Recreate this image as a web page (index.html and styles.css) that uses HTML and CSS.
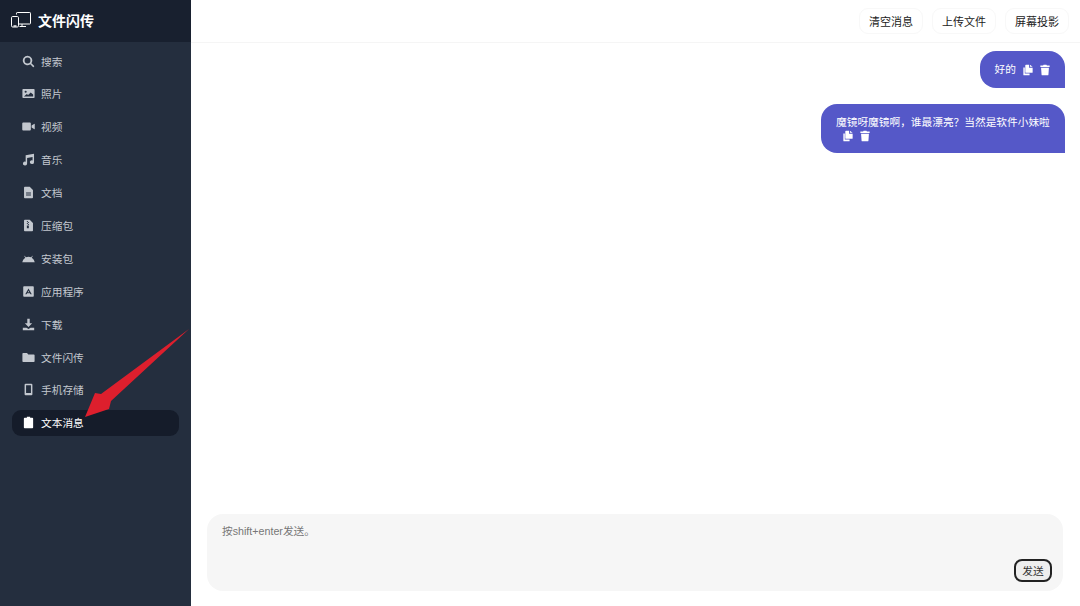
FILE: index.html
```html
<!DOCTYPE html>
<html lang="zh-CN">
<head>
    <meta charset="UTF-8">
    <meta name="viewport" content="width=device-width, initial-scale=1.0">
    <title>文件闪传</title>
    <link rel="stylesheet" href="styles.css">
</head>
<body>
    <aside class="sidebar">
        <div class="brand">
            <svg class="brand-icon" viewBox="0 0 20 16" fill="none" stroke="currentColor" stroke-width="1">
                <path d="M5.5 2.5V1.2a.7.7 0 0 1 .7-.7h12.6a.7.7 0 0 1 .7.7v10.1a.7.7 0 0 1-.7.7H8"/>
                <path d="M11 12v2.5M8.5 14.5H15"/>
                <rect x="0.5" y="4.5" width="7" height="10.5" rx="1.2"/>
                <path d="M2.5 14h3" stroke-width="1.4"/>
            </svg>
            文件闪传
        </div>
        <nav class="menu">
            <a class="menu-item">
                <svg class="icon" viewBox="0 0 16 16"><path d="M6.8 1a5.8 5.8 0 1 0 3.4 10.5l3.2 3.2a1 1 0 0 0 1.4-1.4l-3.2-3.2A5.8 5.8 0 0 0 6.8 1zm0 2.2a3.6 3.6 0 1 1 0 7.2 3.6 3.6 0 0 1 0-7.2z"/></svg>
                搜索
            </a>
            <a class="menu-item">
                <svg class="icon" viewBox="0 0 16 16"><path fill-rule="evenodd" d="M1.5 2.5h13a1 1 0 0 1 1 1v9a1 1 0 0 1-1 1h-13a1 1 0 0 1-1-1v-9a1 1 0 0 1 1-1zm3 2a1.3 1.3 0 1 0 0 2.6 1.3 1.3 0 0 0 0-2.6zM2.3 11.8h11.4V9.3l-3-2.5-3.2 3-1.6-1.2z"/></svg>
                照片
            </a>
            <a class="menu-item">
                <svg class="icon" viewBox="0 0 16 16"><path d="M1.5 3h8.2a1.2 1.2 0 0 1 1.2 1.2v7.600a1.2 1.2 0 0 1-1.2 1.2H1.5a1.2 1.2 0 0 1-1.2-1.2V4.2A1.2 1.2 0 0 1 1.5 3zM11.8 6.8l3-2a.6.6 0 0 1 .9.5v5.400a.6.6 0 0 1-.9.5l-3-2z"/></svg>
                视频
            </a>
            <a class="menu-item">
                <svg class="icon" viewBox="0 0 16 16"><path d="M14.8 1v10.3a2.6 2.3 0 1 1-1.8-2.2V4.8L6.3 6.2V13a2.6 2.3 0 1 1-1.8-2.2V2.8z"/></svg>
                音乐
            </a>
            <a class="menu-item">
                <svg class="icon" viewBox="0 0 16 16"><path fill-rule="evenodd" d="M3.5 1h6l4 4v9a1 1 0 0 1-1 1h-9a1 1 0 0 1-1-1V2a1 1 0 0 1 1-1zM5 8v1.200h6V8zm0 2.500v1.200h6v-1.200z"/></svg>
                文档
            </a>
            <a class="menu-item">
                <svg class="icon" viewBox="0 0 16 16"><path fill-rule="evenodd" d="M3.5 1h6l4 4v9a1 1 0 0 1-1 1h-9a1 1 0 0 1-1-1V2a1 1 0 0 1 1-1zM6 2.5v1.2h1.2V2.500zM7.2 3.7v1.2h1.2V3.700zM6 4.9v1.2h1.2V4.900zM7.2 6.1v1.2h1.2V6.100zM6 8v3.500h2.400V8z"/></svg>
                压缩包
            </a>
            <a class="menu-item">
                <svg class="icon" viewBox="0 0 16 16"><path fill-rule="evenodd" d="M.3 12.5A7.700 7.700 0 0 1 4 7L2.800 5l.6-.4 1.3 2a7.500 7.500 0 0 1 6.600 0l1.300-2 .6.4L12 7a7.700 7.700 0 0 1 3.700 5.500z"/></svg>
                安装包
            </a>
            <a class="menu-item">
                <svg class="icon" viewBox="0 0 16 16"><path fill-rule="evenodd" d="M2.5 1.5h11a1 1 0 0 1 1 1v11a1 1 0 0 1-1 1h-11a1 1 0 0 1-1-1v-11a1 1 0 0 1 1-1zM8 4.200 4 11.500h1.600l.7-1.300h3.400l.7 1.300H12zM8 7l1 2H7z"/></svg>
                应用程序
            </a>
            <a class="menu-item">
                <svg class="icon" viewBox="0 0 16 16"><path d="M6.5 1h3v5.500h3L8 11 3.500 6.500h3zM1 12h4.500L8 13.500 10.500 12H15v3H1z"/></svg>
                下载
            </a>
            <a class="menu-item">
                <svg class="icon" viewBox="0 0 16 16"><path d="M1.5 2.500h4.700l1.500 1.800h6.800a1 1 0 0 1 1 1v7.200a1 1 0 0 1-1 1h-13a1 1 0 0 1-1-1v-9a1 1 0 0 1 1-1z"/></svg>
                文件闪传
            </a>
            <a class="menu-item">
                <svg class="icon" viewBox="0 0 16 16"><path fill-rule="evenodd" d="M4.5.8h7a1.300 1.300 0 0 1 1.300 1.300v11.800a1.300 1.300 0 0 1-1.300 1.300h-7a1.300 1.300 0 0 1-1.300-1.300V2.100A1.300 1.300 0 0 1 4.500.8zM5 2.800v9.400h6V2.800z"/></svg>
                手机存储
            </a>
            <a class="menu-item active">
                <svg class="icon" viewBox="0 0 16 16"><path d="M6 .8h4v1.400h2.700a1 1 0 0 1 1 1V14a1 1 0 0 1-1 1H3.300a1 1 0 0 1-1-1V3.200a1 1 0 0 1 1-1H6z"/></svg>
                文本消息
            </a>
        </nav>
    </aside>

    <main class="content">
        <header class="toolbar">
            <button class="tool-btn">清空消息</button>
            <button class="tool-btn">上传文件</button>
            <button class="tool-btn">屏幕投影</button>
        </header>

        <section class="messages">
            <div class="bubble">好的<span class="bubble-actions">
                    <svg class="small-icon" viewBox="0 0 14 16"><path d="M.5 4.500h2v8.300h6.700V15.500H1.500a1 1 0 0 1-1-1zM4.200.5H8.500v4.300h5V11a1 1 0 0 1-1 1H4.200a1 1 0 0 1-1-1V1.500a1 1 0 0 1 1-1zM9.700.5l3.800 3.100H9.700z"/></svg>
                    <svg class="small-icon" viewBox="0 0 14 16"><path d="M5 .5h4l.7 1.300H13.500v1.900H.5V1.800h3.800zM1.500 5h11l-.7 9.600a1 1 0 0 1-1 .9H3.200a1 1 0 0 1-1-.9z"/></svg>
                </span></div>
            <div class="bubble">魔镜呀魔镜啊&#65292;谁最漂亮&#65311;当然是软件小妹啦<span class="bubble-actions">
                    <svg class="small-icon" viewBox="0 0 14 16"><path d="M.5 4.500h2v8.300h6.700V15.500H1.500a1 1 0 0 1-1-1zM4.200.5H8.500v4.300h5V11a1 1 0 0 1-1 1H4.200a1 1 0 0 1-1-1V1.500a1 1 0 0 1 1-1zM9.700.5l3.800 3.100H9.700z"/></svg>
                    <svg class="small-icon" viewBox="0 0 14 16"><path d="M5 .5h4l.7 1.300H13.500v1.900H.5V1.800h3.800zM1.500 5h11l-.7 9.600a1 1 0 0 1-1 .9H3.200a1 1 0 0 1-1-.9z"/></svg>
                </span></div>
        </section>

        <form class="composer">
            <div class="composer-hint">按shift+enter发送。</div>
            <button class="send-btn" type="button">发送</button>
        </form>
    </main>

    <svg class="arrow" viewBox="0 0 110 95">
        <path d="M109 4 31 76 29 84 5 92 15 68 21 69z"/>
    </svg>
</body>
</html>
```

FILE: styles.css
```css
* {
    box-sizing: border-box;
}

html, body {
    height: 100%;
}

body {
    display: flex;
    margin: 0;
    background-color: white;
    color: #222;
    font-family: "Liberation Sans", "Noto Sans CJK SC", sans-serif;
    font-size: 10.7px;
    overflow: hidden;
}

.sidebar {
    width: 191px;
    flex-shrink: 0;
    background-color: #242e3e;
    color: #c3c8cf;
}

.brand {
    height: 42px;
    padding: 0 0 2px 11px;
    display: flex;
    align-items: center;
    gap: 7px;
    color: white;
    font-size: 14px;
    font-weight: bold;
    background-color: #18202f;
}

.brand-icon {
    width: 20px;
    height: 16px;
}

.menu {
    padding: 6px 12px;
    display: flex;
    flex-direction: column;
    gap: 6.9px;
}

.menu-item {
    height: 26px;
    padding-left: 10px;
    display: flex;
    align-items: center;
    gap: 6px;
    border-radius: 9px;
}

.menu-item.active {
    background-color: #151c2a;
    color: white;
}

.icon {
    width: 13px;
    height: 13px;
    fill: currentColor;
}

.content {
    flex-grow: 1;
    display: flex;
    flex-direction: column;
    min-width: 0;
}

.toolbar {
    height: 43px;
    padding-right: 11px;
    display: flex;
    align-items: center;
    justify-content: flex-end;
    gap: 9px;
    border-bottom: 1px solid #f5f5f5;
}

.tool-btn {
    height: 26px;
    padding: 0 9px;
    border: 1px solid #f8f8f8;
    border-radius: 9px;
    background-color: white;
    color: #222;
    font: inherit;
    font-size: 11px;
}

.messages {
    flex-grow: 1;
    padding: 8px 15px;
    display: flex;
    flex-direction: column;
    align-items: flex-end;
    gap: 16px;
}

.bubble {
    max-width: 244px;
    padding: 12px 15px 11.5px;
    background-color: #5558c8;
    color: white;
    line-height: 13px;
    border-radius: 16px 16px 0 16px;
}

.bubble-actions {
    display: inline-flex;
    gap: 7px;
    margin-left: 7px;
    vertical-align: top;
}

.small-icon {
    width: 10px;
    height: 12px;
    margin-top: 1px;
    fill: currentColor;
}

.composer {
    height: 77px;
    margin: 0 17px 15px 16px;
    padding: 9px 15px 10px;
    flex-shrink: 0;
    display: flex;
    flex-direction: column;
    justify-content: space-between;
    align-items: flex-start;
    border-radius: 16px;
    background-color: #f6f6f6;
    color: #777;
}

.send-btn {
    width: 38px;
    height: 23px;
    margin: 0 -4px -1px auto;
    padding: 0;
    border: 2px solid #222;
    border-radius: 8px;
    background-color: #eee;
    color: #333;
    font: inherit;
}

.arrow {
    position: absolute;
    left: 80px;
    top: 325px;
    width: 110px;
    height: 95px;
    fill: #dd1f2d;
}
```
